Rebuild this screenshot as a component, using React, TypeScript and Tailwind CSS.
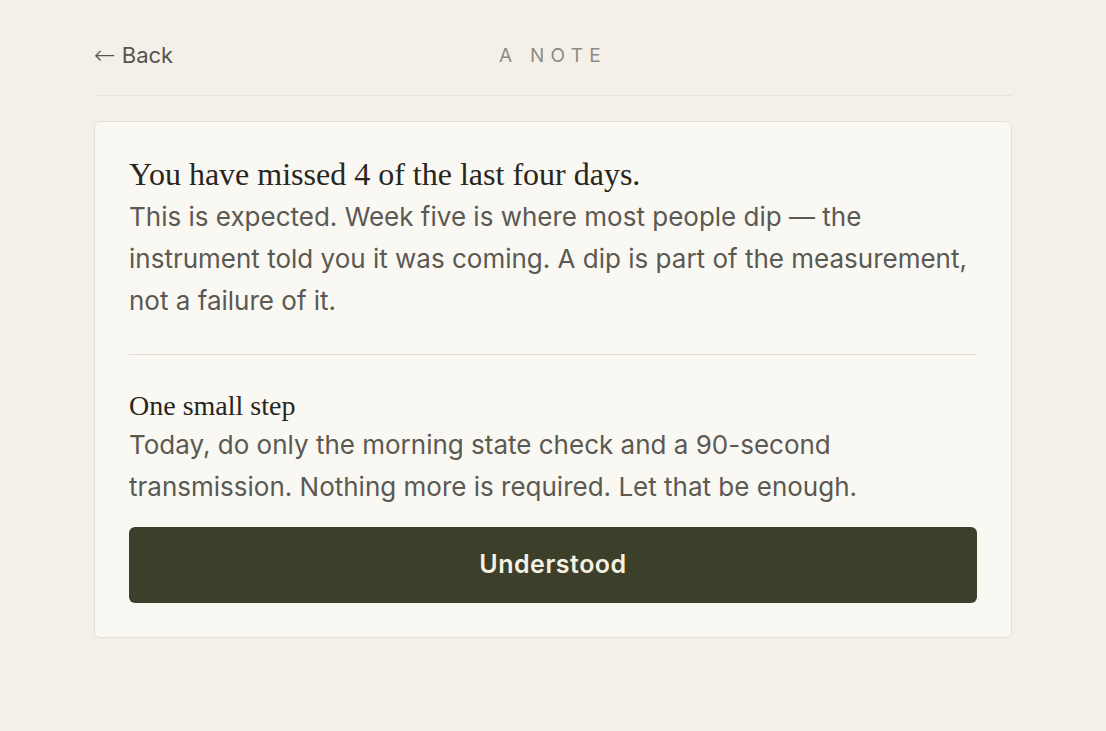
export default function App() {
  const sans = { fontFamily: "Inter, 'Noto Sans', sans-serif" };
  const serif = { fontFamily: "'Liberation Serif', 'DejaVu Serif', serif" };
  return (
    <div className="min-h-[731px] w-full bg-[#f4f0e9]" style={sans}>
      <div className="mx-auto w-[918px] pt-[36px]">
        <header className="relative box-content flex h-[38px] items-center border-b border-[#e9e3d8] pb-[21px]">
          <button className="flex items-center gap-[6px] text-[22px] text-[#55554d]">
            <span className="text-[26px] font-light leading-none" style={{ fontFamily: "'DejaVu Sans', sans-serif" }}>←</span>
            <span>Back</span>
          </button>
          <div className="absolute left-1/2 top-[6px] -translate-x-1/2 text-[19px] tracking-[0.33em] text-[#8d8b83]">
            A NOTE
          </div>
        </header>

        <div className="mt-[25px] rounded-md border border-[#e6e0d4] bg-[#faf8f2] px-[34px] pt-[30px] pb-[34px]">
          <h1 className="text-[32px] leading-[44px] text-[#27261f]" style={serif}>
            You have missed 4 of the last four days.
          </h1>
          <p className="text-[26px] leading-[42px] text-[#5a5952]">
            This is expected. Week five is where most people dip — the instrument told you it was coming. A dip is part of the measurement, not a failure of it.
          </p>

          <div className="mt-[32px] border-t border-[#e2ddd2]" />

          <h2 className="mt-[33px] text-[28px] leading-[36px] text-[#27261f]" style={serif}>
            One small step
          </h2>
          <p className="text-[26px] leading-[42px] text-[#5a5952]">
            Today, do only the morning state check and a 90-second transmission. Nothing more is required. Let that be enough.
          </p>

          <button className="mt-[19px] flex h-[76px] w-full items-center justify-center rounded-md bg-[#3c3f2a] text-[25px] font-semibold tracking-[0.02em] text-[#f6f1e4]">
            Understood
          </button>
        </div>
      </div>
    </div>
  );
}
